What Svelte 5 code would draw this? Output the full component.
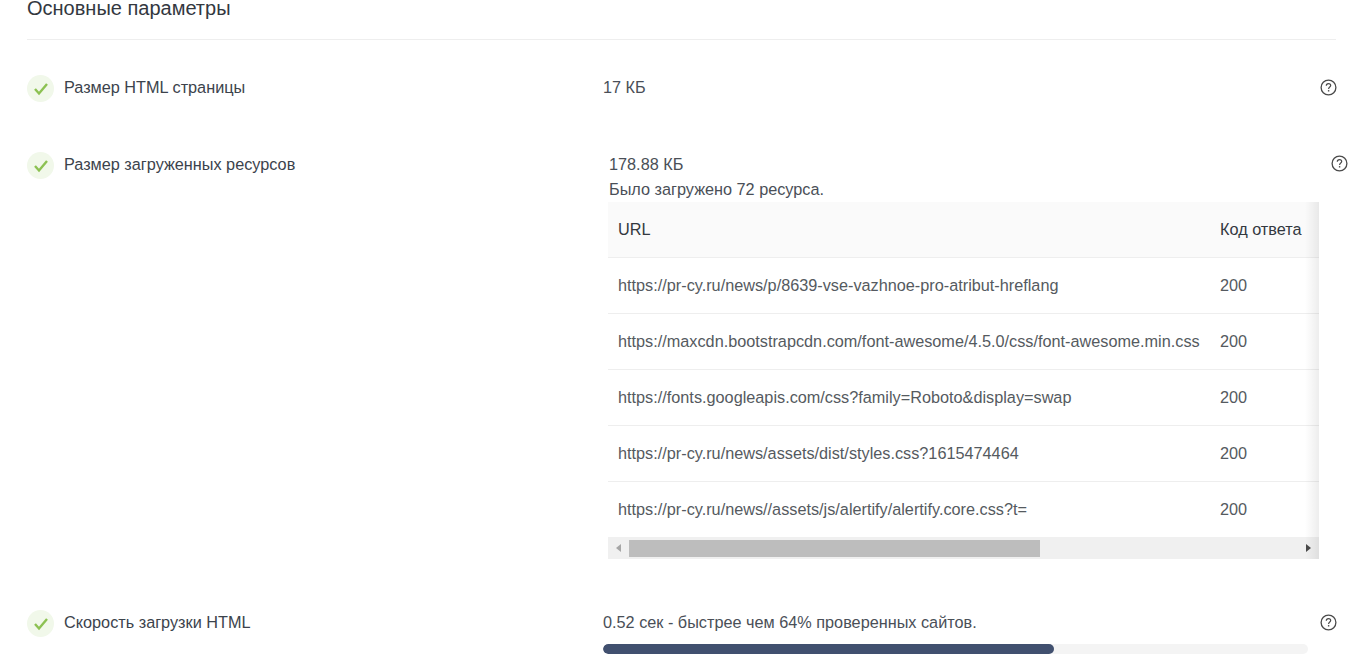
<script>
  const rows = [
    'https://pr-cy.ru/news/p/8639-vse-vazhnoe-pro-atribut-hreflang',
    'https://maxcdn.bootstrapcdn.com/font-awesome/4.5.0/css/font-awesome.min.css',
    'https://fonts.googleapis.com/css?family=Roboto&display=swap',
    'https://pr-cy.ru/news/assets/dist/styles.css?1615474464',
    'https://pr-cy.ru/news//assets/js/alertify/alertify.core.css?t='
  ];
</script>

{#snippet check()}
  <span class="check">
    <svg width="16" height="14" viewBox="0 0 16 14" fill="none"><path d="M2 7 L6 11.5 L14 2" stroke="#8cc152" stroke-width="2.4"/></svg>
  </span>
{/snippet}

{#snippet help()}
  <svg class="help" width="17" height="17" viewBox="0 0 17 17" fill="none">
    <circle cx="8.5" cy="8.5" r="7.4" stroke="#4a4a4a" stroke-width="1.3"/>
    <path d="M6.3 6.8 C6.3 5.4 7.3 4.6 8.5 4.6 C9.8 4.6 10.7 5.4 10.7 6.5 C10.7 8 8.6 8.1 8.6 9.9" stroke="#4a4a4a" stroke-width="1.2"/>
    <rect x="7.9" y="11.1" width="1.4" height="1.4" fill="#4a4a4a"/>
  </svg>
{/snippet}

<main class="page">
  <h2 class="title">Основные параметры</h2>

  <section class="row first">
    <div class="name">{@render check()}<span>Размер HTML страницы</span></div>
    <div class="value">17 КБ</div>
    {@render help()}
  </section>

  <section class="row second">
    <div class="name">{@render check()}<span>Размер загруженных ресурсов</span></div>
    <div class="value inset">
      <div class="line">178.88 КБ</div>
      <div class="line">Было загружено 72 ресурса.</div>
      <div class="tablewrap">
        <div class="clip">
          <table>
            <thead><tr><th class="url">URL</th><th>Код ответа</th></tr></thead>
            <tbody>
              {#each rows as r}
                <tr><td class="url">{r}</td><td>200</td></tr>
              {/each}
            </tbody>
          </table>
        </div>
        <div class="scrollbar">
          <span class="arrow left"></span>
          <span class="thumb"></span>
          <span class="arrow right"></span>
        </div>
        <div class="shadow"></div>
      </div>
    </div>
    {@render help()}
  </section>

  <section class="row third">
    <div class="name">{@render check()}<span>Скорость загрузки HTML</span></div>
    <div class="value">
      <div>0.52 сек - быстрее чем 64% проверенных сайтов.</div>
      <div class="progress"><div class="fill"></div></div>
    </div>
    {@render help()}
  </section>
</main>

<style>
  :global(body) {
    margin: 0;
    background: #fff;
    overflow: hidden;
  }
  .page {
    height: 666px;
    overflow: hidden;
    box-sizing: border-box;
    padding: 0 28px 0 27px;
    font-family: "Liberation Sans", Arial, sans-serif;
    font-size: 16.25px;
    line-height: 20px;
    color: #4a4f57;
  }
  .title {
    margin: -4px 0 0;
    padding-bottom: 19px;
    font-size: 20px;
    line-height: 24px;
    font-weight: 400;
    color: #33383f;
    border-bottom: 1px solid #eeeeee;
    margin-right: 1px;
  }
  .row {
    display: grid;
    grid-template-columns: 576px 1fr auto;
    align-items: start;
  }
  .first { margin-top: 35px; }
  .second { margin-top: 50px; }
  .third { margin-top: 51px; }
  .name {
    display: flex;
    align-items: flex-start;
    gap: 10px;
    color: #3c434c;
  }
  .name span:last-child { line-height: 20px; margin-top: 2px; }
  .check {
    width: 27px;
    height: 27px;
    border-radius: 50%;
    background: #f1f8ea;
    display: flex;
    align-items: center;
    justify-content: center;
    flex: none;
  }
  .value { padding-top: 2px; min-width: 0; }
  .inset { padding-left: 6px; }
  .line { line-height: 25px; }
  .line:first-child { line-height: 20px; padding-bottom: 3px; }
  .help { margin-top: 4px; }
  .second .help { margin-top: 3px; margin-right: -11px; }
  .tablewrap {
    position: relative;
    width: 711px;
    margin-left: -1px;
    margin-top: 0;
  }
  .clip { overflow: hidden; }
  table {
    border-collapse: collapse;
    table-layout: fixed;
    width: 800px;
  }
  th, td {
    height: 56px;
    box-sizing: border-box;
    padding: 0 10px;
    text-align: left;
    font-weight: 400;
    border-bottom: 1px solid #eeeeee;
    white-space: nowrap;
  }
  th { height: 55px; background: #fafafa; color: #33383f; }
  td { color: #555a60; }
  tbody tr:last-child td { border-bottom: 0; }
  .url { width: 602px; }
  .scrollbar {
    height: 22px;
    background: #f0f0f0;
    display: flex;
    align-items: center;
    box-sizing: border-box;
    padding: 0 8px 0 8px;
  }
  .thumb {
    width: 411px;
    height: 17px;
    background: #bdbdbd;
    margin-left: 8px;
  }
  .arrow { width: 0; height: 0; border-top: 4px solid transparent; border-bottom: 4px solid transparent; }
  .arrow.left { border-right: 5px solid #a6a6a6; }
  .arrow.right { border-left: 5px solid #4a4a4a; margin-left: auto; }
  .shadow {
    position: absolute;
    top: 0;
    right: 0;
    bottom: 0;
    width: 14px;
    background: linear-gradient(to right, rgba(0,0,0,0), rgba(0,0,0,0.07));
    pointer-events: none;
  }
  .progress {
    margin-top: 12px;
    width: 705px;
    height: 10px;
    border-radius: 5px;
    background: #f4f4f4;
    overflow: hidden;
  }
  .fill {
    width: 451px;
    height: 100%;
    border-radius: 5px;
    background: #41506f;
  }
</style>
